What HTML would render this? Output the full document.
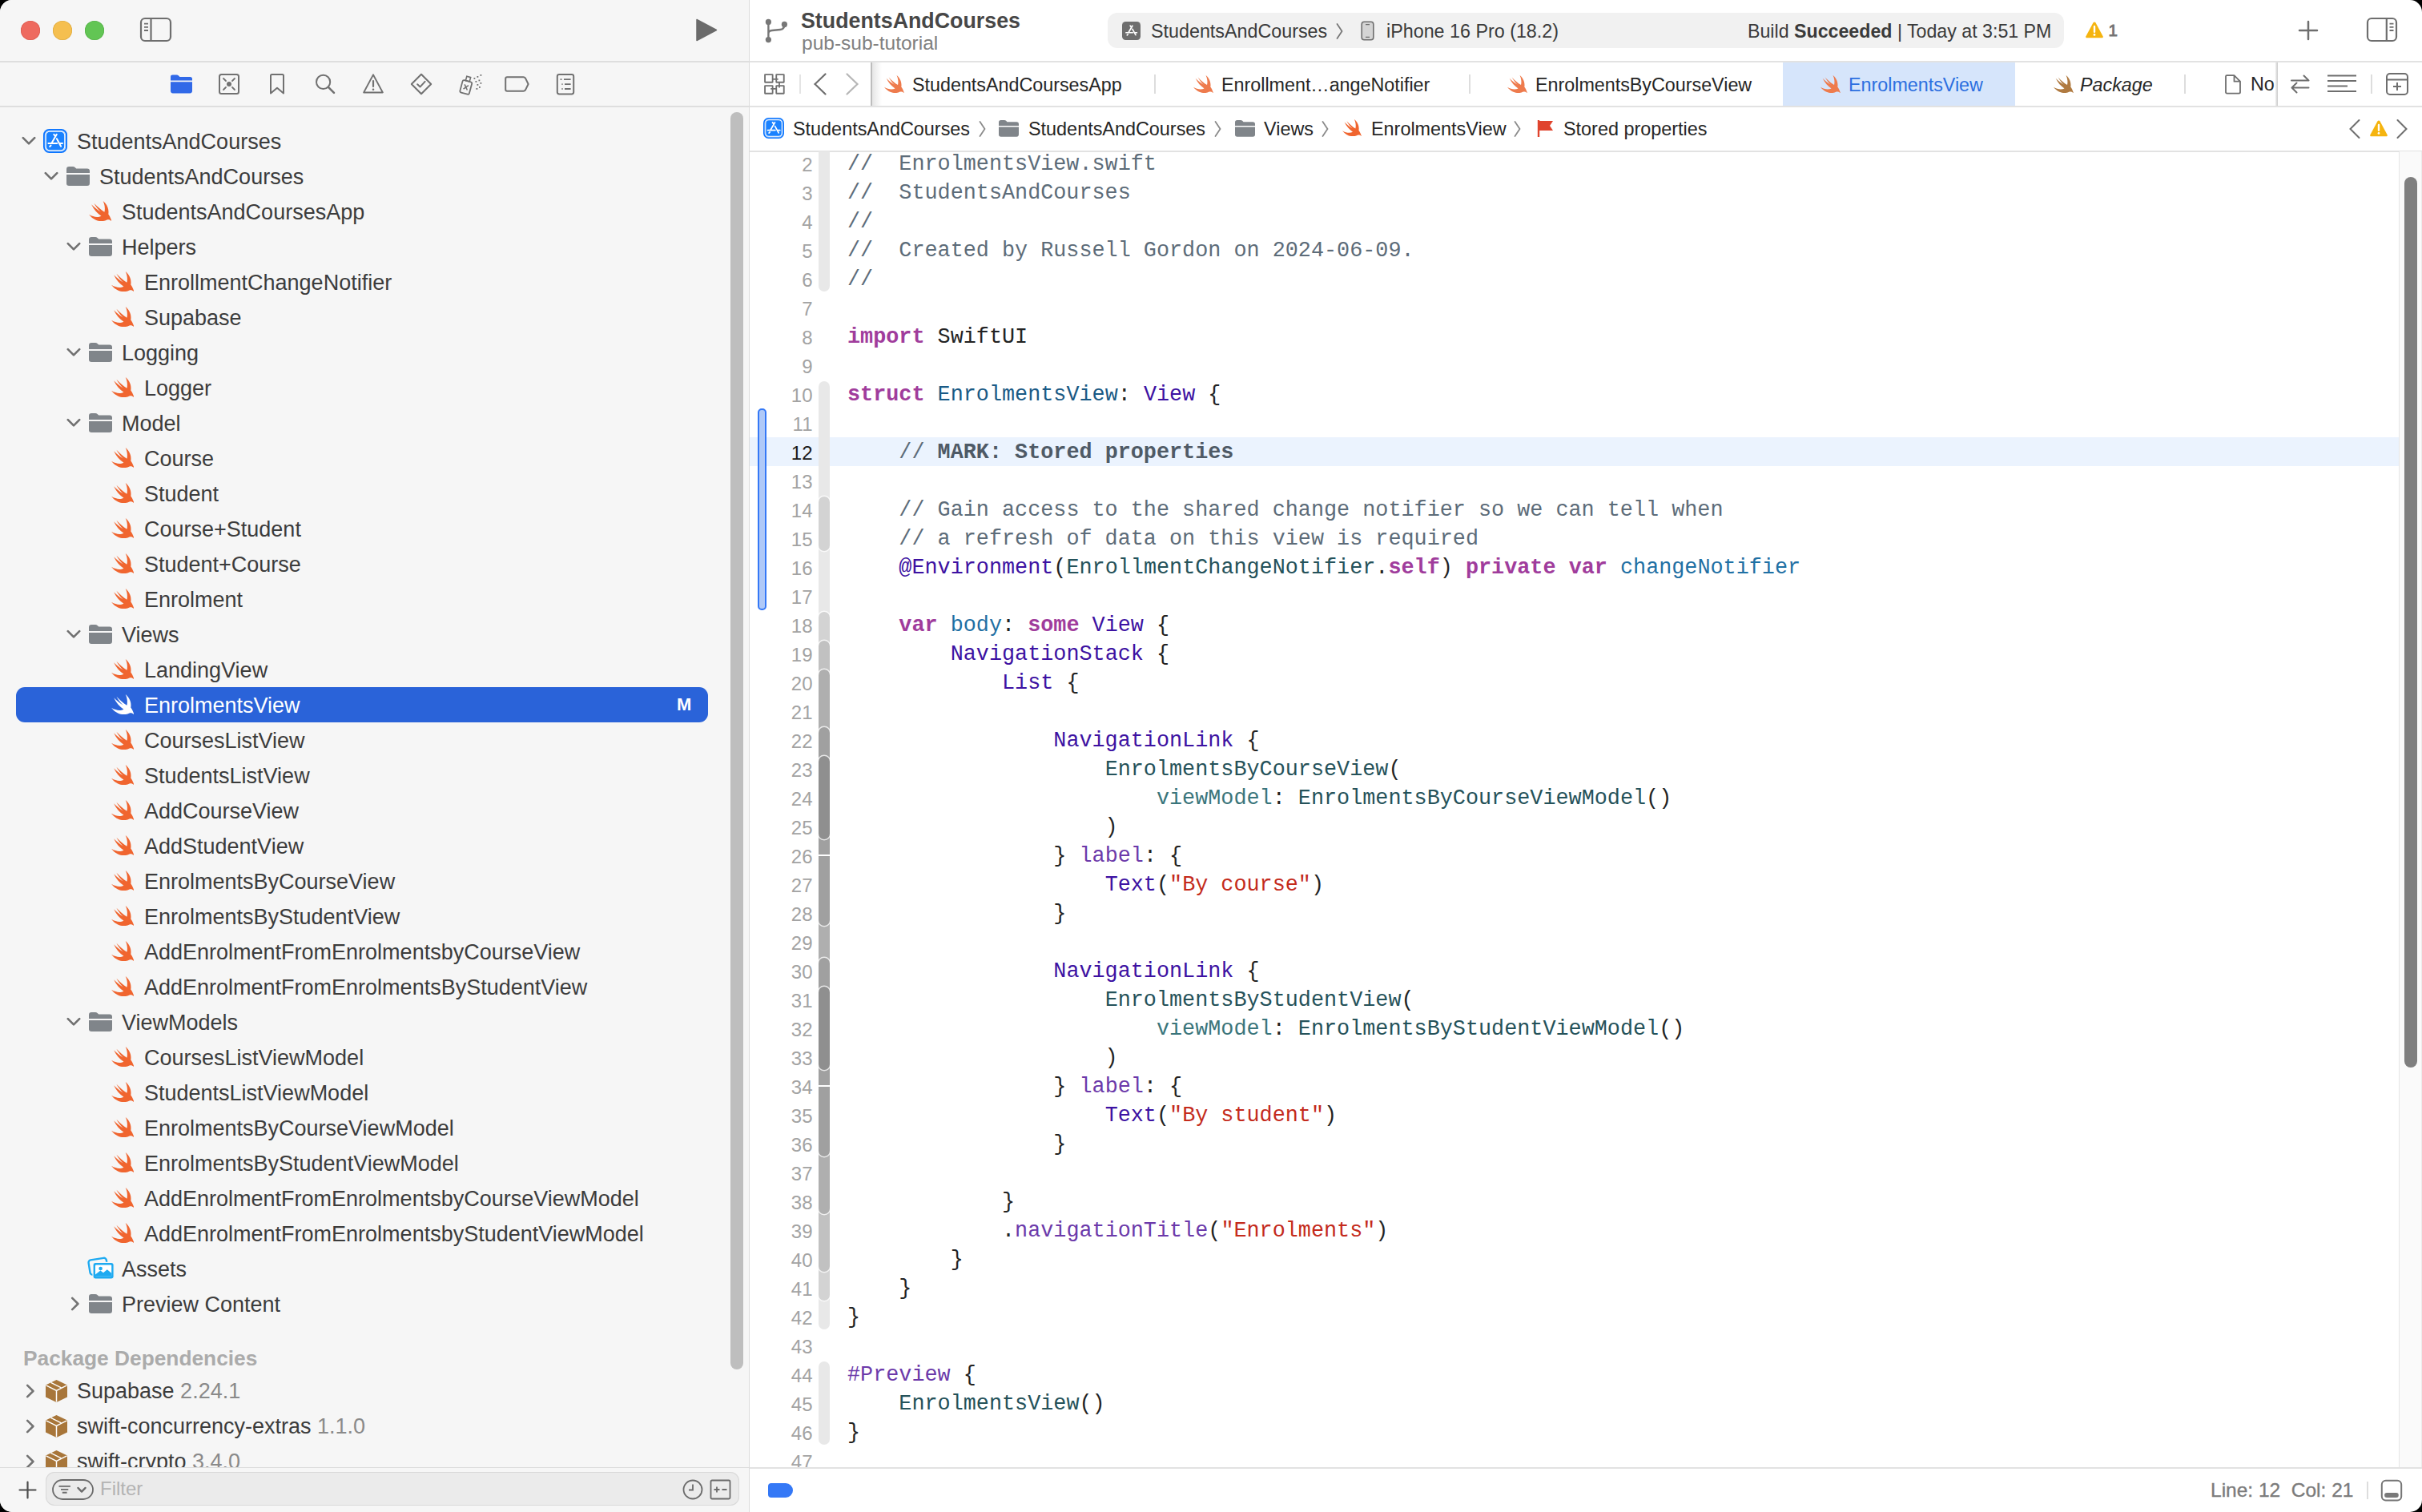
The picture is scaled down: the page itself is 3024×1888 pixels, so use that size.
<!DOCTYPE html><html><head><meta charset="utf-8"><style>
html,body{margin:0;padding:0;width:3024px;height:1888px;overflow:hidden;background:#000;}
#win{position:absolute;left:0;top:0;width:3024px;height:1888px;border-radius:15px;overflow:hidden;background:#fff;}
.abs{position:absolute;}
.code{position:absolute;left:1058px;font-family:"Liberation Mono",monospace;font-size:26.8px;white-space:pre;color:#232323;}
.ln{position:absolute;left:960px;width:59.5px;text-align:right;font-family:"Liberation Sans",sans-serif;font-size:24px;color:#a3a3a3;}
.row{position:absolute;height:44px;line-height:44px;font-family:"Liberation Sans",sans-serif;font-size:27px;color:#3c3c3c;white-space:pre;}
.k{color:#a03c9c;font-weight:bold}.c{color:#5d6c79}.s{color:#c42b1c}.t{color:#1a5a85}.d{color:#1f70a4}.sy{color:#3d12a2}.p{color:#25525a}.pf{color:#3a757b}.sf{color:#6c3aaa}.mk{color:#4f5a66;font-weight:bold}
</style></head><body><div id="win">
<div class="abs" style="left:0;top:0;width:935px;height:1888px;background:#f6f6f6"></div>
<div class="abs" style="left:0;top:76px;width:935px;height:2px;background:#dedede"></div>
<div class="abs" style="left:0;top:132px;width:935px;height:2px;background:#dedede"></div>
<div class="abs" style="left:935px;top:0;width:1px;height:1888px;background:#dcdcdc"></div>
<div class="abs" style="left:26px;top:26px;width:24px;height:24px;border-radius:50%;background:#ee6a5f;box-shadow:inset 0 0 0 0.6px #d8574b"></div>
<div class="abs" style="left:66px;top:26px;width:24px;height:24px;border-radius:50%;background:#f5bf4f;box-shadow:inset 0 0 0 0.6px #dba73c"></div>
<div class="abs" style="left:106px;top:26px;width:24px;height:24px;border-radius:50%;background:#62c554;box-shadow:inset 0 0 0 0.6px #52ad45"></div>
<svg class="abs" style="left:174px;top:21px" width="41" height="32" viewBox="0 0 41 32"><rect x="2" y="2" width="37" height="28" rx="5" fill="none" stroke="#6e6e6e" stroke-width="2.2"/><path d="M14.5,2 V30" stroke="#6e6e6e" stroke-width="2.2"/><path d="M6,8.6 H11 M6,12.8 H11 M6,17 H11" stroke="#6e6e6e" stroke-width="1.8"/></svg>
<svg class="abs" style="left:866px;top:22px" width="32" height="32" viewBox="0 0 32 32"><path d="M4,2.5 L28.5,15.5 L4,28.5 Z" fill="#6b6b6b" stroke="#6b6b6b" stroke-width="1.5" stroke-linejoin="round"/></svg>
<svg class="abs" style="left:213px;top:93px" width="27" height="24" viewBox="0 0 27 24"><path fill="#3169e8" d="M0,3 Q0,0.6 2.6,0.6 H7.6 Q9,0.6 10,1.6 L11.4,3 H24.4 Q27,3 27,5.6 V7.4 H0 Z"/><path fill="#3169e8" d="M0,9.2 H27 V20.6 Q27,23.4 24.2,23.4 H2.8 Q0,23.4 0,20.6 Z"/></svg>
<svg class="abs" style="left:272px;top:91px" width="28" height="28" viewBox="0 0 28 28"><rect x="2" y="2" width="24" height="24" rx="2.5" fill="none" stroke="#717171" stroke-width="2"/><circle cx="14" cy="14" r="3" fill="#717171"/><path d="M7,7 L10,10 M21,7 L18,10 M7,21 L10,18 M21,21 L18,18" stroke="#717171" stroke-width="1.8" stroke-linecap="round"/></svg>
<svg class="abs" style="left:335px;top:91px" width="22" height="28" viewBox="0 0 22 28"><path d="M3,3.5 Q3,2 4.5,2 H17.5 Q19,2 19,3.5 V25.5 L11,18.8 L3,25.5 Z" fill="none" stroke="#717171" stroke-width="2" stroke-linejoin="round"/></svg>
<svg class="abs" style="left:392px;top:91px" width="28" height="28" viewBox="0 0 28 28"><circle cx="11.6" cy="11.4" r="8.6" fill="none" stroke="#717171" stroke-width="2"/><path d="M18,17.8 L25,24.8" stroke="#717171" stroke-width="2.6" stroke-linecap="round"/></svg>
<svg class="abs" style="left:452px;top:91px" width="28" height="28" viewBox="0 0 28 28"><path d="M14,2.4 L25.8,24.4 H2.2 Z" fill="none" stroke="#717171" stroke-width="2" stroke-linejoin="round"/><path d="M14,10 V17" stroke="#717171" stroke-width="2.2" stroke-linecap="round"/><circle cx="14" cy="20.8" r="1.3" fill="#717171"/></svg>
<svg class="abs" style="left:512px;top:91px" width="28" height="28" viewBox="0 0 28 28"><path d="M14,1.8 L26.2,14 L14,26.2 L1.8,14 Z" fill="none" stroke="#717171" stroke-width="2" stroke-linejoin="round"/><path d="M9.2,14.2 L12.6,17.4 L18.6,10.8" fill="none" stroke="#717171" stroke-width="2" stroke-linecap="round" stroke-linejoin="round"/></svg>
<svg class="abs" style="left:572px;top:91px" width="30" height="28" viewBox="0 0 30 28"><g transform="rotate(15 10 17)"><rect x="4" y="10" width="12" height="16" rx="2" fill="none" stroke="#717171" stroke-width="1.8"/><rect x="7.5" y="4.5" width="5" height="5.5" fill="none" stroke="#717171" stroke-width="1.6"/><path d="M7.5,15 L12.5,21 M12.5,15 L7.5,21" stroke="#717171" stroke-width="1.6"/></g><g fill="#717171"><rect x="19.5" y="6" width="1.8" height="1.8"/><rect x="23.5" y="4" width="1.8" height="1.8"/><rect x="27.5" y="2" width="1.8" height="1.8"/><rect x="21.5" y="10" width="1.8" height="1.8"/><rect x="25.5" y="8.5" width="1.8" height="1.8"/><rect x="27.5" y="12" width="1.8" height="1.8"/><rect x="23.5" y="14" width="1.8" height="1.8"/><rect x="26" y="17" width="1.8" height="1.8"/><rect x="22.5" y="19" width="1.8" height="1.8"/></g></svg>
<svg class="abs" style="left:630px;top:94px" width="32" height="22" viewBox="0 0 32 22"><path d="M3.2,2.2 H23.5 Q25,2.2 26,3.6 L29.6,11 L26,18.4 Q25,19.8 23.5,19.8 H3.2 Q1.2,19.8 1.2,17.8 V4.2 Q1.2,2.2 3.2,2.2 Z" fill="none" stroke="#717171" stroke-width="2" stroke-linejoin="round"/></svg>
<svg class="abs" style="left:694px;top:91px" width="24" height="28" viewBox="0 0 24 28"><rect x="1.8" y="2" width="20.4" height="24.4" rx="2.4" fill="none" stroke="#717171" stroke-width="2"/><path d="M5.6,8.2 H7.4 M10,8.2 H18.6 M7.4,14.2 H8.6 M11,14.2 H18.6 M7.4,20 H8.6 M11,20 H18.6" stroke="#717171" stroke-width="1.8"/></svg>
<div class="abs" style="left:0;top:134px;width:935px;height:1698px;overflow:hidden">
<svg style="position:absolute;left:27px;top:35.5px" width="18" height="12" viewBox="0 0 18 12"><path d="M1.8,2.2 L9,9.4 L16.2,2.2" fill="none" stroke="#707070" stroke-width="2.6" stroke-linecap="round" stroke-linejoin="round"/></svg>
<svg style="position:absolute;left:54px;top:27px" width="30" height="30" viewBox="0 0 30 30"><rect x="0" y="0" width="30" height="30" rx="7.5" fill="#0a74ff"/><rect x="2.4" y="2.4" width="25.2" height="25.2" rx="5.4" fill="#ffffff"/><rect x="2.4" y="2.4" width="25.2" height="25.2" rx="5.4" fill="none" stroke="#b9d6fb" stroke-width="1.2"/><rect x="3.8" y="3.8" width="22.4" height="22.4" rx="4.2" fill="#1a82ff"/><g stroke="#fff" stroke-width="2" stroke-linecap="round" fill="none"><path d="M13.3,6.8 L15.1,9.2 M16.8,6.8 L10.3,17.9 M6.4,17.9 H17.2 M20.4,17.9 H24 M16.9,12.2 L22.1,21.8 M9.5,20.6 L8.2,22"/></g></svg>
<div class="row" style="left:96px;top:21px;color:#3c3c3c">StudentsAndCourses</div>
<svg style="position:absolute;left:55px;top:79.5px" width="18" height="12" viewBox="0 0 18 12"><path d="M1.8,2.2 L9,9.4 L16.2,2.2" fill="none" stroke="#707070" stroke-width="2.6" stroke-linecap="round" stroke-linejoin="round"/></svg>
<svg style="position:absolute;left:83.0px;top:74px" width="29" height="24" viewBox="0 0 29 24"><path fill="#80858a" d="M0,3.2 Q0,0 3.2,0 H8 Q9.6,0 10.6,1 L12.2,2.6 H25.8 Q29,2.6 29,5.6 V8 H0 Z"/><path fill="#80858a" d="M0,10 H29 V20.8 Q29,24 25.8,24 H3.2 Q0,24 0,20.8 Z"/></svg>
<div class="row" style="left:124px;top:65px;color:#3c3c3c">StudentsAndCourses</div>
<svg style="position:absolute;left:110.5px;top:116.5px" width="28.5" height="25.4" viewBox="0 0 28.5 25.4"><path fill="#f0652f" d="M17.7,0 C22.2,3.6 25.4,9.6 24.3,16.4 C26,18.6 27.4,21.8 28.5,25.4 C26.9,23.6 24.7,22.9 22.6,23.5 C17.2,26.4 7.4,26.3 0,16.8 C5.8,20.3 11.6,20.7 15.4,18.7 C10.6,15.4 6.1,10.9 3.1,4.3 C6.9,8.1 11.3,11.6 14.6,13.4 C11.6,10.7 8.6,6.7 6.4,2.7 C10.2,6.6 15.1,11.1 19.4,13.8 C20.4,9.6 19.9,4.6 17.7,0 Z"/></svg>
<div class="row" style="left:152px;top:109px;color:#3c3c3c">StudentsAndCoursesApp</div>
<svg style="position:absolute;left:83px;top:167.5px" width="18" height="12" viewBox="0 0 18 12"><path d="M1.8,2.2 L9,9.4 L16.2,2.2" fill="none" stroke="#707070" stroke-width="2.6" stroke-linecap="round" stroke-linejoin="round"/></svg>
<svg style="position:absolute;left:111.0px;top:162px" width="29" height="24" viewBox="0 0 29 24"><path fill="#80858a" d="M0,3.2 Q0,0 3.2,0 H8 Q9.6,0 10.6,1 L12.2,2.6 H25.8 Q29,2.6 29,5.6 V8 H0 Z"/><path fill="#80858a" d="M0,10 H29 V20.8 Q29,24 25.8,24 H3.2 Q0,24 0,20.8 Z"/></svg>
<div class="row" style="left:152px;top:153px;color:#3c3c3c">Helpers</div>
<svg style="position:absolute;left:138.5px;top:204.5px" width="28.5" height="25.4" viewBox="0 0 28.5 25.4"><path fill="#f0652f" d="M17.7,0 C22.2,3.6 25.4,9.6 24.3,16.4 C26,18.6 27.4,21.8 28.5,25.4 C26.9,23.6 24.7,22.9 22.6,23.5 C17.2,26.4 7.4,26.3 0,16.8 C5.8,20.3 11.6,20.7 15.4,18.7 C10.6,15.4 6.1,10.9 3.1,4.3 C6.9,8.1 11.3,11.6 14.6,13.4 C11.6,10.7 8.6,6.7 6.4,2.7 C10.2,6.6 15.1,11.1 19.4,13.8 C20.4,9.6 19.9,4.6 17.7,0 Z"/></svg>
<div class="row" style="left:180px;top:197px;color:#3c3c3c">EnrollmentChangeNotifier</div>
<svg style="position:absolute;left:138.5px;top:248.5px" width="28.5" height="25.4" viewBox="0 0 28.5 25.4"><path fill="#f0652f" d="M17.7,0 C22.2,3.6 25.4,9.6 24.3,16.4 C26,18.6 27.4,21.8 28.5,25.4 C26.9,23.6 24.7,22.9 22.6,23.5 C17.2,26.4 7.4,26.3 0,16.8 C5.8,20.3 11.6,20.7 15.4,18.7 C10.6,15.4 6.1,10.9 3.1,4.3 C6.9,8.1 11.3,11.6 14.6,13.4 C11.6,10.7 8.6,6.7 6.4,2.7 C10.2,6.6 15.1,11.1 19.4,13.8 C20.4,9.6 19.9,4.6 17.7,0 Z"/></svg>
<div class="row" style="left:180px;top:241px;color:#3c3c3c">Supabase</div>
<svg style="position:absolute;left:83px;top:299.5px" width="18" height="12" viewBox="0 0 18 12"><path d="M1.8,2.2 L9,9.4 L16.2,2.2" fill="none" stroke="#707070" stroke-width="2.6" stroke-linecap="round" stroke-linejoin="round"/></svg>
<svg style="position:absolute;left:111.0px;top:294px" width="29" height="24" viewBox="0 0 29 24"><path fill="#80858a" d="M0,3.2 Q0,0 3.2,0 H8 Q9.6,0 10.6,1 L12.2,2.6 H25.8 Q29,2.6 29,5.6 V8 H0 Z"/><path fill="#80858a" d="M0,10 H29 V20.8 Q29,24 25.8,24 H3.2 Q0,24 0,20.8 Z"/></svg>
<div class="row" style="left:152px;top:285px;color:#3c3c3c">Logging</div>
<svg style="position:absolute;left:138.5px;top:336.5px" width="28.5" height="25.4" viewBox="0 0 28.5 25.4"><path fill="#f0652f" d="M17.7,0 C22.2,3.6 25.4,9.6 24.3,16.4 C26,18.6 27.4,21.8 28.5,25.4 C26.9,23.6 24.7,22.9 22.6,23.5 C17.2,26.4 7.4,26.3 0,16.8 C5.8,20.3 11.6,20.7 15.4,18.7 C10.6,15.4 6.1,10.9 3.1,4.3 C6.9,8.1 11.3,11.6 14.6,13.4 C11.6,10.7 8.6,6.7 6.4,2.7 C10.2,6.6 15.1,11.1 19.4,13.8 C20.4,9.6 19.9,4.6 17.7,0 Z"/></svg>
<div class="row" style="left:180px;top:329px;color:#3c3c3c">Logger</div>
<svg style="position:absolute;left:83px;top:387.5px" width="18" height="12" viewBox="0 0 18 12"><path d="M1.8,2.2 L9,9.4 L16.2,2.2" fill="none" stroke="#707070" stroke-width="2.6" stroke-linecap="round" stroke-linejoin="round"/></svg>
<svg style="position:absolute;left:111.0px;top:382px" width="29" height="24" viewBox="0 0 29 24"><path fill="#80858a" d="M0,3.2 Q0,0 3.2,0 H8 Q9.6,0 10.6,1 L12.2,2.6 H25.8 Q29,2.6 29,5.6 V8 H0 Z"/><path fill="#80858a" d="M0,10 H29 V20.8 Q29,24 25.8,24 H3.2 Q0,24 0,20.8 Z"/></svg>
<div class="row" style="left:152px;top:373px;color:#3c3c3c">Model</div>
<svg style="position:absolute;left:138.5px;top:424.5px" width="28.5" height="25.4" viewBox="0 0 28.5 25.4"><path fill="#f0652f" d="M17.7,0 C22.2,3.6 25.4,9.6 24.3,16.4 C26,18.6 27.4,21.8 28.5,25.4 C26.9,23.6 24.7,22.9 22.6,23.5 C17.2,26.4 7.4,26.3 0,16.8 C5.8,20.3 11.6,20.7 15.4,18.7 C10.6,15.4 6.1,10.9 3.1,4.3 C6.9,8.1 11.3,11.6 14.6,13.4 C11.6,10.7 8.6,6.7 6.4,2.7 C10.2,6.6 15.1,11.1 19.4,13.8 C20.4,9.6 19.9,4.6 17.7,0 Z"/></svg>
<div class="row" style="left:180px;top:417px;color:#3c3c3c">Course</div>
<svg style="position:absolute;left:138.5px;top:468.5px" width="28.5" height="25.4" viewBox="0 0 28.5 25.4"><path fill="#f0652f" d="M17.7,0 C22.2,3.6 25.4,9.6 24.3,16.4 C26,18.6 27.4,21.8 28.5,25.4 C26.9,23.6 24.7,22.9 22.6,23.5 C17.2,26.4 7.4,26.3 0,16.8 C5.8,20.3 11.6,20.7 15.4,18.7 C10.6,15.4 6.1,10.9 3.1,4.3 C6.9,8.1 11.3,11.6 14.6,13.4 C11.6,10.7 8.6,6.7 6.4,2.7 C10.2,6.6 15.1,11.1 19.4,13.8 C20.4,9.6 19.9,4.6 17.7,0 Z"/></svg>
<div class="row" style="left:180px;top:461px;color:#3c3c3c">Student</div>
<svg style="position:absolute;left:138.5px;top:512.5px" width="28.5" height="25.4" viewBox="0 0 28.5 25.4"><path fill="#f0652f" d="M17.7,0 C22.2,3.6 25.4,9.6 24.3,16.4 C26,18.6 27.4,21.8 28.5,25.4 C26.9,23.6 24.7,22.9 22.6,23.5 C17.2,26.4 7.4,26.3 0,16.8 C5.8,20.3 11.6,20.7 15.4,18.7 C10.6,15.4 6.1,10.9 3.1,4.3 C6.9,8.1 11.3,11.6 14.6,13.4 C11.6,10.7 8.6,6.7 6.4,2.7 C10.2,6.6 15.1,11.1 19.4,13.8 C20.4,9.6 19.9,4.6 17.7,0 Z"/></svg>
<div class="row" style="left:180px;top:505px;color:#3c3c3c">Course+Student</div>
<svg style="position:absolute;left:138.5px;top:556.5px" width="28.5" height="25.4" viewBox="0 0 28.5 25.4"><path fill="#f0652f" d="M17.7,0 C22.2,3.6 25.4,9.6 24.3,16.4 C26,18.6 27.4,21.8 28.5,25.4 C26.9,23.6 24.7,22.9 22.6,23.5 C17.2,26.4 7.4,26.3 0,16.8 C5.8,20.3 11.6,20.7 15.4,18.7 C10.6,15.4 6.1,10.9 3.1,4.3 C6.9,8.1 11.3,11.6 14.6,13.4 C11.6,10.7 8.6,6.7 6.4,2.7 C10.2,6.6 15.1,11.1 19.4,13.8 C20.4,9.6 19.9,4.6 17.7,0 Z"/></svg>
<div class="row" style="left:180px;top:549px;color:#3c3c3c">Student+Course</div>
<svg style="position:absolute;left:138.5px;top:600.5px" width="28.5" height="25.4" viewBox="0 0 28.5 25.4"><path fill="#f0652f" d="M17.7,0 C22.2,3.6 25.4,9.6 24.3,16.4 C26,18.6 27.4,21.8 28.5,25.4 C26.9,23.6 24.7,22.9 22.6,23.5 C17.2,26.4 7.4,26.3 0,16.8 C5.8,20.3 11.6,20.7 15.4,18.7 C10.6,15.4 6.1,10.9 3.1,4.3 C6.9,8.1 11.3,11.6 14.6,13.4 C11.6,10.7 8.6,6.7 6.4,2.7 C10.2,6.6 15.1,11.1 19.4,13.8 C20.4,9.6 19.9,4.6 17.7,0 Z"/></svg>
<div class="row" style="left:180px;top:593px;color:#3c3c3c">Enrolment</div>
<svg style="position:absolute;left:83px;top:651.5px" width="18" height="12" viewBox="0 0 18 12"><path d="M1.8,2.2 L9,9.4 L16.2,2.2" fill="none" stroke="#707070" stroke-width="2.6" stroke-linecap="round" stroke-linejoin="round"/></svg>
<svg style="position:absolute;left:111.0px;top:646px" width="29" height="24" viewBox="0 0 29 24"><path fill="#80858a" d="M0,3.2 Q0,0 3.2,0 H8 Q9.6,0 10.6,1 L12.2,2.6 H25.8 Q29,2.6 29,5.6 V8 H0 Z"/><path fill="#80858a" d="M0,10 H29 V20.8 Q29,24 25.8,24 H3.2 Q0,24 0,20.8 Z"/></svg>
<div class="row" style="left:152px;top:637px;color:#3c3c3c">Views</div>
<svg style="position:absolute;left:138.5px;top:688.5px" width="28.5" height="25.4" viewBox="0 0 28.5 25.4"><path fill="#f0652f" d="M17.7,0 C22.2,3.6 25.4,9.6 24.3,16.4 C26,18.6 27.4,21.8 28.5,25.4 C26.9,23.6 24.7,22.9 22.6,23.5 C17.2,26.4 7.4,26.3 0,16.8 C5.8,20.3 11.6,20.7 15.4,18.7 C10.6,15.4 6.1,10.9 3.1,4.3 C6.9,8.1 11.3,11.6 14.6,13.4 C11.6,10.7 8.6,6.7 6.4,2.7 C10.2,6.6 15.1,11.1 19.4,13.8 C20.4,9.6 19.9,4.6 17.7,0 Z"/></svg>
<div class="row" style="left:180px;top:681px;color:#3c3c3c">LandingView</div>
<div class="abs" style="left:20px;top:724px;width:864px;height:44px;border-radius:11px;background:#2a63d9"></div>
<svg style="position:absolute;left:138.5px;top:732.5px" width="28.5" height="25.4" viewBox="0 0 28.5 25.4"><path fill="#ffffff" d="M17.7,0 C22.2,3.6 25.4,9.6 24.3,16.4 C26,18.6 27.4,21.8 28.5,25.4 C26.9,23.6 24.7,22.9 22.6,23.5 C17.2,26.4 7.4,26.3 0,16.8 C5.8,20.3 11.6,20.7 15.4,18.7 C10.6,15.4 6.1,10.9 3.1,4.3 C6.9,8.1 11.3,11.6 14.6,13.4 C11.6,10.7 8.6,6.7 6.4,2.7 C10.2,6.6 15.1,11.1 19.4,13.8 C20.4,9.6 19.9,4.6 17.7,0 Z"/></svg>
<div class="row" style="left:180px;top:725px;color:#ffffff">EnrolmentsView</div>
<div class="abs" style="left:845px;top:724px;height:44px;line-height:44px;font-family:'Liberation Sans', sans-serif;font-weight:bold;font-size:22px;color:#fff">M</div>
<svg style="position:absolute;left:138.5px;top:776.5px" width="28.5" height="25.4" viewBox="0 0 28.5 25.4"><path fill="#f0652f" d="M17.7,0 C22.2,3.6 25.4,9.6 24.3,16.4 C26,18.6 27.4,21.8 28.5,25.4 C26.9,23.6 24.7,22.9 22.6,23.5 C17.2,26.4 7.4,26.3 0,16.8 C5.8,20.3 11.6,20.7 15.4,18.7 C10.6,15.4 6.1,10.9 3.1,4.3 C6.9,8.1 11.3,11.6 14.6,13.4 C11.6,10.7 8.6,6.7 6.4,2.7 C10.2,6.6 15.1,11.1 19.4,13.8 C20.4,9.6 19.9,4.6 17.7,0 Z"/></svg>
<div class="row" style="left:180px;top:769px;color:#3c3c3c">CoursesListView</div>
<svg style="position:absolute;left:138.5px;top:820.5px" width="28.5" height="25.4" viewBox="0 0 28.5 25.4"><path fill="#f0652f" d="M17.7,0 C22.2,3.6 25.4,9.6 24.3,16.4 C26,18.6 27.4,21.8 28.5,25.4 C26.9,23.6 24.7,22.9 22.6,23.5 C17.2,26.4 7.4,26.3 0,16.8 C5.8,20.3 11.6,20.7 15.4,18.7 C10.6,15.4 6.1,10.9 3.1,4.3 C6.9,8.1 11.3,11.6 14.6,13.4 C11.6,10.7 8.6,6.7 6.4,2.7 C10.2,6.6 15.1,11.1 19.4,13.8 C20.4,9.6 19.9,4.6 17.7,0 Z"/></svg>
<div class="row" style="left:180px;top:813px;color:#3c3c3c">StudentsListView</div>
<svg style="position:absolute;left:138.5px;top:864.5px" width="28.5" height="25.4" viewBox="0 0 28.5 25.4"><path fill="#f0652f" d="M17.7,0 C22.2,3.6 25.4,9.6 24.3,16.4 C26,18.6 27.4,21.8 28.5,25.4 C26.9,23.6 24.7,22.9 22.6,23.5 C17.2,26.4 7.4,26.3 0,16.8 C5.8,20.3 11.6,20.7 15.4,18.7 C10.6,15.4 6.1,10.9 3.1,4.3 C6.9,8.1 11.3,11.6 14.6,13.4 C11.6,10.7 8.6,6.7 6.4,2.7 C10.2,6.6 15.1,11.1 19.4,13.8 C20.4,9.6 19.9,4.6 17.7,0 Z"/></svg>
<div class="row" style="left:180px;top:857px;color:#3c3c3c">AddCourseView</div>
<svg style="position:absolute;left:138.5px;top:908.5px" width="28.5" height="25.4" viewBox="0 0 28.5 25.4"><path fill="#f0652f" d="M17.7,0 C22.2,3.6 25.4,9.6 24.3,16.4 C26,18.6 27.4,21.8 28.5,25.4 C26.9,23.6 24.7,22.9 22.6,23.5 C17.2,26.4 7.4,26.3 0,16.8 C5.8,20.3 11.6,20.7 15.4,18.7 C10.6,15.4 6.1,10.9 3.1,4.3 C6.9,8.1 11.3,11.6 14.6,13.4 C11.6,10.7 8.6,6.7 6.4,2.7 C10.2,6.6 15.1,11.1 19.4,13.8 C20.4,9.6 19.9,4.6 17.7,0 Z"/></svg>
<div class="row" style="left:180px;top:901px;color:#3c3c3c">AddStudentView</div>
<svg style="position:absolute;left:138.5px;top:952.5px" width="28.5" height="25.4" viewBox="0 0 28.5 25.4"><path fill="#f0652f" d="M17.7,0 C22.2,3.6 25.4,9.6 24.3,16.4 C26,18.6 27.4,21.8 28.5,25.4 C26.9,23.6 24.7,22.9 22.6,23.5 C17.2,26.4 7.4,26.3 0,16.8 C5.8,20.3 11.6,20.7 15.4,18.7 C10.6,15.4 6.1,10.9 3.1,4.3 C6.9,8.1 11.3,11.6 14.6,13.4 C11.6,10.7 8.6,6.7 6.4,2.7 C10.2,6.6 15.1,11.1 19.4,13.8 C20.4,9.6 19.9,4.6 17.7,0 Z"/></svg>
<div class="row" style="left:180px;top:945px;color:#3c3c3c">EnrolmentsByCourseView</div>
<svg style="position:absolute;left:138.5px;top:996.5px" width="28.5" height="25.4" viewBox="0 0 28.5 25.4"><path fill="#f0652f" d="M17.7,0 C22.2,3.6 25.4,9.6 24.3,16.4 C26,18.6 27.4,21.8 28.5,25.4 C26.9,23.6 24.7,22.9 22.6,23.5 C17.2,26.4 7.4,26.3 0,16.8 C5.8,20.3 11.6,20.7 15.4,18.7 C10.6,15.4 6.1,10.9 3.1,4.3 C6.9,8.1 11.3,11.6 14.6,13.4 C11.6,10.7 8.6,6.7 6.4,2.7 C10.2,6.6 15.1,11.1 19.4,13.8 C20.4,9.6 19.9,4.6 17.7,0 Z"/></svg>
<div class="row" style="left:180px;top:989px;color:#3c3c3c">EnrolmentsByStudentView</div>
<svg style="position:absolute;left:138.5px;top:1040.5px" width="28.5" height="25.4" viewBox="0 0 28.5 25.4"><path fill="#f0652f" d="M17.7,0 C22.2,3.6 25.4,9.6 24.3,16.4 C26,18.6 27.4,21.8 28.5,25.4 C26.9,23.6 24.7,22.9 22.6,23.5 C17.2,26.4 7.4,26.3 0,16.8 C5.8,20.3 11.6,20.7 15.4,18.7 C10.6,15.4 6.1,10.9 3.1,4.3 C6.9,8.1 11.3,11.6 14.6,13.4 C11.6,10.7 8.6,6.7 6.4,2.7 C10.2,6.6 15.1,11.1 19.4,13.8 C20.4,9.6 19.9,4.6 17.7,0 Z"/></svg>
<div class="row" style="left:180px;top:1033px;color:#3c3c3c">AddEnrolmentFromEnrolmentsbyCourseView</div>
<svg style="position:absolute;left:138.5px;top:1084.5px" width="28.5" height="25.4" viewBox="0 0 28.5 25.4"><path fill="#f0652f" d="M17.7,0 C22.2,3.6 25.4,9.6 24.3,16.4 C26,18.6 27.4,21.8 28.5,25.4 C26.9,23.6 24.7,22.9 22.6,23.5 C17.2,26.4 7.4,26.3 0,16.8 C5.8,20.3 11.6,20.7 15.4,18.7 C10.6,15.4 6.1,10.9 3.1,4.3 C6.9,8.1 11.3,11.6 14.6,13.4 C11.6,10.7 8.6,6.7 6.4,2.7 C10.2,6.6 15.1,11.1 19.4,13.8 C20.4,9.6 19.9,4.6 17.7,0 Z"/></svg>
<div class="row" style="left:180px;top:1077px;color:#3c3c3c">AddEnrolmentFromEnrolmentsByStudentView</div>
<svg style="position:absolute;left:83px;top:1135.5px" width="18" height="12" viewBox="0 0 18 12"><path d="M1.8,2.2 L9,9.4 L16.2,2.2" fill="none" stroke="#707070" stroke-width="2.6" stroke-linecap="round" stroke-linejoin="round"/></svg>
<svg style="position:absolute;left:111.0px;top:1130px" width="29" height="24" viewBox="0 0 29 24"><path fill="#80858a" d="M0,3.2 Q0,0 3.2,0 H8 Q9.6,0 10.6,1 L12.2,2.6 H25.8 Q29,2.6 29,5.6 V8 H0 Z"/><path fill="#80858a" d="M0,10 H29 V20.8 Q29,24 25.8,24 H3.2 Q0,24 0,20.8 Z"/></svg>
<div class="row" style="left:152px;top:1121px;color:#3c3c3c">ViewModels</div>
<svg style="position:absolute;left:138.5px;top:1172.5px" width="28.5" height="25.4" viewBox="0 0 28.5 25.4"><path fill="#f0652f" d="M17.7,0 C22.2,3.6 25.4,9.6 24.3,16.4 C26,18.6 27.4,21.8 28.5,25.4 C26.9,23.6 24.7,22.9 22.6,23.5 C17.2,26.4 7.4,26.3 0,16.8 C5.8,20.3 11.6,20.7 15.4,18.7 C10.6,15.4 6.1,10.9 3.1,4.3 C6.9,8.1 11.3,11.6 14.6,13.4 C11.6,10.7 8.6,6.7 6.4,2.7 C10.2,6.6 15.1,11.1 19.4,13.8 C20.4,9.6 19.9,4.6 17.7,0 Z"/></svg>
<div class="row" style="left:180px;top:1165px;color:#3c3c3c">CoursesListViewModel</div>
<svg style="position:absolute;left:138.5px;top:1216.5px" width="28.5" height="25.4" viewBox="0 0 28.5 25.4"><path fill="#f0652f" d="M17.7,0 C22.2,3.6 25.4,9.6 24.3,16.4 C26,18.6 27.4,21.8 28.5,25.4 C26.9,23.6 24.7,22.9 22.6,23.5 C17.2,26.4 7.4,26.3 0,16.8 C5.8,20.3 11.6,20.7 15.4,18.7 C10.6,15.4 6.1,10.9 3.1,4.3 C6.9,8.1 11.3,11.6 14.6,13.4 C11.6,10.7 8.6,6.7 6.4,2.7 C10.2,6.6 15.1,11.1 19.4,13.8 C20.4,9.6 19.9,4.6 17.7,0 Z"/></svg>
<div class="row" style="left:180px;top:1209px;color:#3c3c3c">StudentsListViewModel</div>
<svg style="position:absolute;left:138.5px;top:1260.5px" width="28.5" height="25.4" viewBox="0 0 28.5 25.4"><path fill="#f0652f" d="M17.7,0 C22.2,3.6 25.4,9.6 24.3,16.4 C26,18.6 27.4,21.8 28.5,25.4 C26.9,23.6 24.7,22.9 22.6,23.5 C17.2,26.4 7.4,26.3 0,16.8 C5.8,20.3 11.6,20.7 15.4,18.7 C10.6,15.4 6.1,10.9 3.1,4.3 C6.9,8.1 11.3,11.6 14.6,13.4 C11.6,10.7 8.6,6.7 6.4,2.7 C10.2,6.6 15.1,11.1 19.4,13.8 C20.4,9.6 19.9,4.6 17.7,0 Z"/></svg>
<div class="row" style="left:180px;top:1253px;color:#3c3c3c">EnrolmentsByCourseViewModel</div>
<svg style="position:absolute;left:138.5px;top:1304.5px" width="28.5" height="25.4" viewBox="0 0 28.5 25.4"><path fill="#f0652f" d="M17.7,0 C22.2,3.6 25.4,9.6 24.3,16.4 C26,18.6 27.4,21.8 28.5,25.4 C26.9,23.6 24.7,22.9 22.6,23.5 C17.2,26.4 7.4,26.3 0,16.8 C5.8,20.3 11.6,20.7 15.4,18.7 C10.6,15.4 6.1,10.9 3.1,4.3 C6.9,8.1 11.3,11.6 14.6,13.4 C11.6,10.7 8.6,6.7 6.4,2.7 C10.2,6.6 15.1,11.1 19.4,13.8 C20.4,9.6 19.9,4.6 17.7,0 Z"/></svg>
<div class="row" style="left:180px;top:1297px;color:#3c3c3c">EnrolmentsByStudentViewModel</div>
<svg style="position:absolute;left:138.5px;top:1348.5px" width="28.5" height="25.4" viewBox="0 0 28.5 25.4"><path fill="#f0652f" d="M17.7,0 C22.2,3.6 25.4,9.6 24.3,16.4 C26,18.6 27.4,21.8 28.5,25.4 C26.9,23.6 24.7,22.9 22.6,23.5 C17.2,26.4 7.4,26.3 0,16.8 C5.8,20.3 11.6,20.7 15.4,18.7 C10.6,15.4 6.1,10.9 3.1,4.3 C6.9,8.1 11.3,11.6 14.6,13.4 C11.6,10.7 8.6,6.7 6.4,2.7 C10.2,6.6 15.1,11.1 19.4,13.8 C20.4,9.6 19.9,4.6 17.7,0 Z"/></svg>
<div class="row" style="left:180px;top:1341px;color:#3c3c3c">AddEnrolmentFromEnrolmentsbyCourseViewModel</div>
<svg style="position:absolute;left:138.5px;top:1392.5px" width="28.5" height="25.4" viewBox="0 0 28.5 25.4"><path fill="#f0652f" d="M17.7,0 C22.2,3.6 25.4,9.6 24.3,16.4 C26,18.6 27.4,21.8 28.5,25.4 C26.9,23.6 24.7,22.9 22.6,23.5 C17.2,26.4 7.4,26.3 0,16.8 C5.8,20.3 11.6,20.7 15.4,18.7 C10.6,15.4 6.1,10.9 3.1,4.3 C6.9,8.1 11.3,11.6 14.6,13.4 C11.6,10.7 8.6,6.7 6.4,2.7 C10.2,6.6 15.1,11.1 19.4,13.8 C20.4,9.6 19.9,4.6 17.7,0 Z"/></svg>
<div class="row" style="left:180px;top:1385px;color:#3c3c3c">AddEnrolmentFromEnrolmentsbyStudentViewModel</div>
<svg style="position:absolute;left:108px;top:1434px" width="36" height="31" viewBox="0 0 36 31"><rect x="3.4" y="4" width="22.5" height="18.5" rx="3" transform="rotate(-9 14.6 13.2)" fill="none" stroke="#1eaaf1" stroke-width="2.4"/><rect x="8" y="8.4" width="26.2" height="20.6" rx="3.2" fill="#1eaaf1" stroke="#f6f6f6" stroke-width="1.2"/><rect x="11" y="11.4" width="20.2" height="14.4" rx="1" fill="#fff"/><path d="M11,23.6 L17.4,18.6 L21,21.2 L25.8,17.2 L31.2,21.8 V25.8 H11 Z" fill="#1eaaf1"/><circle cx="17.6" cy="16" r="2.3" fill="#1eaaf1"/></svg>
<div class="row" style="left:152px;top:1429px;color:#3c3c3c">Assets</div>
<svg style="position:absolute;left:88px;top:1485px" width="12" height="18" viewBox="0 0 12 18"><path d="M2.2,1.8 L9.4,9 L2.2,16.2" fill="none" stroke="#737373" stroke-width="2.6" stroke-linecap="round" stroke-linejoin="round"/></svg>
<svg style="position:absolute;left:111.0px;top:1482px" width="29" height="24" viewBox="0 0 29 24"><path fill="#80858a" d="M0,3.2 Q0,0 3.2,0 H8 Q9.6,0 10.6,1 L12.2,2.6 H25.8 Q29,2.6 29,5.6 V8 H0 Z"/><path fill="#80858a" d="M0,10 H29 V20.8 Q29,24 25.8,24 H3.2 Q0,24 0,20.8 Z"/></svg>
<div class="row" style="left:152px;top:1473px;color:#3c3c3c">Preview Content</div>
<div class="row" style="left:29px;top:1540px;font-weight:bold;font-size:26.3px;color:#ababab">Package Dependencies</div>
<svg style="position:absolute;left:32px;top:1594px" width="12" height="18" viewBox="0 0 12 18"><path d="M2.2,1.8 L9.4,9 L2.2,16.2" fill="none" stroke="#737373" stroke-width="2.6" stroke-linecap="round" stroke-linejoin="round"/></svg>
<svg style="position:absolute;left:57px;top:1589px" width="27" height="28" viewBox="0 0 27 28"><path fill="#a8763a" d="M13.5,0 L27,6.6 V21.4 L13.5,28 L0,21.4 V6.6 Z"/><g stroke="#fff" stroke-width="1.5" fill="none"><path d="M0.5,6.9 L13.5,13.3 L26.5,6.9"/><path d="M13.5,13.3 V27.6"/><path d="M6.5,3.3 L19.5,9.8"/></g></svg>
<div class="row" style="left:96px;top:1581px">Supabase <span style="color:#8a8a8a">2.24.1</span></div>
<svg style="position:absolute;left:32px;top:1638px" width="12" height="18" viewBox="0 0 12 18"><path d="M2.2,1.8 L9.4,9 L2.2,16.2" fill="none" stroke="#737373" stroke-width="2.6" stroke-linecap="round" stroke-linejoin="round"/></svg>
<svg style="position:absolute;left:57px;top:1633px" width="27" height="28" viewBox="0 0 27 28"><path fill="#a8763a" d="M13.5,0 L27,6.6 V21.4 L13.5,28 L0,21.4 V6.6 Z"/><g stroke="#fff" stroke-width="1.5" fill="none"><path d="M0.5,6.9 L13.5,13.3 L26.5,6.9"/><path d="M13.5,13.3 V27.6"/><path d="M6.5,3.3 L19.5,9.8"/></g></svg>
<div class="row" style="left:96px;top:1625px">swift-concurrency-extras <span style="color:#8a8a8a">1.1.0</span></div>
<svg style="position:absolute;left:32px;top:1682px" width="12" height="18" viewBox="0 0 12 18"><path d="M2.2,1.8 L9.4,9 L2.2,16.2" fill="none" stroke="#737373" stroke-width="2.6" stroke-linecap="round" stroke-linejoin="round"/></svg>
<svg style="position:absolute;left:57px;top:1677px" width="27" height="28" viewBox="0 0 27 28"><path fill="#a8763a" d="M13.5,0 L27,6.6 V21.4 L13.5,28 L0,21.4 V6.6 Z"/><g stroke="#fff" stroke-width="1.5" fill="none"><path d="M0.5,6.9 L13.5,13.3 L26.5,6.9"/><path d="M13.5,13.3 V27.6"/><path d="M6.5,3.3 L19.5,9.8"/></g></svg>
<div class="row" style="left:96px;top:1669px">swift-crypto <span style="color:#8a8a8a">3.4.0</span></div>
<div class="abs" style="left:912px;top:6px;width:16px;height:1570px;border-radius:8px;background:#bebebe"></div>
</div>
<div class="abs" style="left:0;top:1832px;width:935px;height:1px;background:#dcdcdc"></div>
<svg class="abs" style="left:23px;top:1849px" width="23" height="23" viewBox="0 0 23 23"><path d="M11.5,1.5 V21.5 M1.5,11.5 H21.5" stroke="#4d4d4d" stroke-width="2.2" stroke-linecap="round"/></svg>
<div class="abs" style="left:57px;top:1838px;width:866px;height:42px;border-radius:11px;background:#ebebeb;box-shadow:inset 0 0 0 1px #d9d9d9"></div>
<svg class="abs" style="left:64px;top:1846px" width="54" height="28" viewBox="0 0 54 28"><rect x="2" y="2" width="50" height="24" rx="12" fill="none" stroke="#6b6b6b" stroke-width="1.8"/><path d="M9.5,9.9 H23.9 M12,13.9 H21.3 M13.8,17.8 H19.6" stroke="#6b6b6b" stroke-width="1.9"/><path d="M33.4,11.9 L38,16.6 L42.6,11.9" fill="none" stroke="#6b6b6b" stroke-width="2.3" stroke-linecap="round" stroke-linejoin="round"/></svg>
<div class="abs" style="left:125px;top:1838px;height:42px;line-height:42px;font-family:'Liberation Sans', sans-serif;font-size:24px;color:#b3b3b3">Filter</div>
<svg class="abs" style="left:851px;top:1846px" width="28" height="28" viewBox="0 0 28 28"><circle cx="14" cy="14" r="11.5" fill="none" stroke="#6b6b6b" stroke-width="1.8"/><path d="M14,7.5 V14.5 H9" fill="none" stroke="#6b6b6b" stroke-width="1.8"/></svg>
<svg class="abs" style="left:886px;top:1847px" width="27" height="26" viewBox="0 0 27 26"><rect x="1.5" y="1.5" width="24" height="23" rx="1.5" fill="none" stroke="#6b6b6b" stroke-width="1.8"/><path d="M5.5,13 H12.5 M9,9.5 V16.5 M15.5,13 H21.5" stroke="#6b6b6b" stroke-width="1.8"/></svg>
<svg class="abs" style="left:954px;top:22px" width="32" height="34" viewBox="0 0 32 34"><circle cx="5.4" cy="5.4" r="3.6" fill="#777"/><circle cx="25.4" cy="8.4" r="3.6" fill="#777"/><circle cx="5.4" cy="27.6" r="3.6" fill="#777"/><path d="M5.4,5.4 V27.6 M5.4,20 Q5.4,16.4 10,16 L20,15 Q25.4,14.4 25.4,8.4" fill="none" stroke="#777" stroke-width="2.4"/></svg>
<div style="position:absolute;left:1000px;top:12.5px;font-family:'Liberation Sans', sans-serif;font-size:26.8px;color:#474747;font-weight:bold;white-space:pre;line-height:1;">StudentsAndCourses</div>
<div style="position:absolute;left:1001px;top:42px;font-family:'Liberation Sans', sans-serif;font-size:24.5px;color:#808080;font-weight:normal;white-space:pre;line-height:1;">pub-sub-tutorial</div>
<div class="abs" style="left:1383px;top:16px;width:1194px;height:44px;border-radius:12px;background:#f1f1f1"></div>
<svg class="abs" style="left:1401px;top:27px" width="23" height="23" viewBox="0 0 23 23"><rect width="23" height="23" rx="4.5" fill="#6e6e6e"/><g transform="scale(0.7667)" stroke="#fff" stroke-width="2.2" stroke-linecap="round" fill="none"><path d="M13.3,6.8 L15.1,9.2 M16.8,6.8 L10.3,17.9 M6.4,17.9 H17.2 M20.4,17.9 H24 M16.9,12.2 L22.1,21.8 M9.5,20.6 L8.2,22"/></g></svg>
<div style="position:absolute;left:1437px;top:28px;font-family:'Liberation Sans', sans-serif;font-size:23.3px;color:#3a3a3a;font-weight:normal;white-space:pre;line-height:1;">StudentsAndCourses</div>
<svg class="abs" style="left:1667px;top:28px" width="11" height="22" viewBox="0 0 11 22"><path d="M2.5,2 L8.5,11 L2.5,20" fill="none" stroke="#777" stroke-width="1.8" stroke-linecap="round"/></svg>
<svg class="abs" style="left:1699px;top:26px" width="17" height="25" viewBox="0 0 17 25"><rect x="1.2" y="1.2" width="14.6" height="22.6" rx="3" fill="#d4d4d4" stroke="#6e6e6e" stroke-width="1.6"/><path d="M6,4.6 H11 M6,20.4 H11" stroke="#6e6e6e" stroke-width="1.2"/></svg>
<div style="position:absolute;left:1731px;top:28px;font-family:'Liberation Sans', sans-serif;font-size:23.3px;color:#3a3a3a;font-weight:normal;white-space:pre;line-height:1;">iPhone 16 Pro (18.2)</div>
<div class="abs" style="left:2182px;top:28px;font-family:'Liberation Sans', sans-serif;font-size:23.2px;color:#3a3a3a;white-space:pre;line-height:1">Build <b>Succeeded</b> | Today at 3:51 PM</div>
<svg class="abs" style="left:2603px;top:26px" width="24" height="23" viewBox="0 0 24 23"><path d="M12,1.5 Q13,1.5 13.6,2.5 L22.6,19.2 Q23.4,21.2 21.2,21.2 H2.8 Q0.6,21.2 1.4,19.2 L10.4,2.5 Q11,1.5 12,1.5 Z" fill="#f5b40f"/><path d="M12,7 V13.8" stroke="#fff" stroke-width="2.4" stroke-linecap="round"/><circle cx="12" cy="17.4" r="1.4" fill="#fff"/></svg>
<div style="position:absolute;left:2632.5px;top:28.2px;font-family:'Liberation Sans', sans-serif;font-size:20.5px;color:#747474;font-weight:normal;white-space:pre;line-height:1;-webkit-text-stroke:0.9px #747474">1</div>
<svg class="abs" style="left:2869px;top:25px" width="26" height="26" viewBox="0 0 26 26"><path d="M13,2 V24 M2,13 H24" stroke="#6e6e6e" stroke-width="2.5" stroke-linecap="round"/></svg>
<svg class="abs" style="left:2954px;top:21px" width="40" height="32" viewBox="0 0 40 32"><rect x="2" y="2" width="36" height="28" rx="5" fill="none" stroke="#6e6e6e" stroke-width="2.2"/><path d="M25.8,2 V30" stroke="#6e6e6e" stroke-width="2.2"/><path d="M29.5,8.6 H34.5 M29.5,12.8 H34.5 M29.5,17 H34.5" stroke="#6e6e6e" stroke-width="1.8"/></svg>
<div class="abs" style="left:936px;top:76px;width:2088px;height:2px;background:#e2e2e2"></div>
<div class="abs" style="left:936px;top:132px;width:2088px;height:2px;background:#e2e2e2"></div>
<div class="abs" style="left:936px;top:188px;width:2088px;height:1.5px;background:#e2e2e2"></div>
<svg class="abs" style="left:953px;top:91px" width="28" height="28" viewBox="0 0 28 28"><g fill="none" stroke="#717171" stroke-width="1.85"><rect x="2.05" y="2.05" width="9.6" height="9.7" rx="0.2"/><rect x="16.25" y="2.05" width="9.5" height="9.7" rx="0.2"/><rect x="2.05" y="16.15" width="9.6" height="9.6" rx="0.2"/><rect x="16.25" y="16.15" width="9.5" height="9.6" rx="0.2"/><path d="M11.6,7.9 H18.6 M20,11.7 V18.6 M9.2,19.9 H16.3"/></g></svg>
<div class="abs" style="left:998px;top:93px;width:2px;height:24px;background:#e4e4e4"></div>
<svg class="abs" style="left:1014px;top:90px" width="20" height="30" viewBox="0 0 20 30"><path d="M16.5,2.5 L3.5,15 L16.5,27.5" fill="none" stroke="#6e6e6e" stroke-width="2.2" stroke-linecap="round"/></svg>
<svg class="abs" style="left:1054px;top:90px" width="20" height="30" viewBox="0 0 20 30"><path d="M3.5,2.5 L16.5,15 L3.5,27.5" fill="none" stroke="#b6b6b6" stroke-width="2.2" stroke-linecap="round"/></svg>
<div class="abs" style="left:1087px;top:78px;width:2px;height:54px;background:#bdbdbd"></div>
<div class="abs" style="left:1089px;top:78px;width:12px;height:54px;background:linear-gradient(to right,#e6e6e6,#ffffff)"></div>
<div class="abs" style="left:2226px;top:78px;width:290px;height:54px;background:#d6e5fb"></div>
<svg style="position:absolute;left:1104px;top:94px" width="25" height="22.3" viewBox="0 0 28.5 25.4"><path fill="#ee7b4d" d="M17.7,0 C22.2,3.6 25.4,9.6 24.3,16.4 C26,18.6 27.4,21.8 28.5,25.4 C26.9,23.6 24.7,22.9 22.6,23.5 C17.2,26.4 7.4,26.3 0,16.8 C5.8,20.3 11.6,20.7 15.4,18.7 C10.6,15.4 6.1,10.9 3.1,4.3 C6.9,8.1 11.3,11.6 14.6,13.4 C11.6,10.7 8.6,6.7 6.4,2.7 C10.2,6.6 15.1,11.1 19.4,13.8 C20.4,9.6 19.9,4.6 17.7,0 Z"/></svg>
<div style="position:absolute;left:1139px;top:94.7px;font-family:'Liberation Sans', sans-serif;font-size:23.3px;color:#262626;font-weight:normal;white-space:pre;line-height:1;font-style:normal">StudentsAndCoursesApp</div>
<svg style="position:absolute;left:1490px;top:94px" width="25" height="22.3" viewBox="0 0 28.5 25.4"><path fill="#ee7b4d" d="M17.7,0 C22.2,3.6 25.4,9.6 24.3,16.4 C26,18.6 27.4,21.8 28.5,25.4 C26.9,23.6 24.7,22.9 22.6,23.5 C17.2,26.4 7.4,26.3 0,16.8 C5.8,20.3 11.6,20.7 15.4,18.7 C10.6,15.4 6.1,10.9 3.1,4.3 C6.9,8.1 11.3,11.6 14.6,13.4 C11.6,10.7 8.6,6.7 6.4,2.7 C10.2,6.6 15.1,11.1 19.4,13.8 C20.4,9.6 19.9,4.6 17.7,0 Z"/></svg>
<div style="position:absolute;left:1525px;top:94.7px;font-family:'Liberation Sans', sans-serif;font-size:23.3px;color:#262626;font-weight:normal;white-space:pre;line-height:1;font-style:normal">Enrollment…angeNotifier</div>
<svg style="position:absolute;left:1882px;top:94px" width="25" height="22.3" viewBox="0 0 28.5 25.4"><path fill="#ee7b4d" d="M17.7,0 C22.2,3.6 25.4,9.6 24.3,16.4 C26,18.6 27.4,21.8 28.5,25.4 C26.9,23.6 24.7,22.9 22.6,23.5 C17.2,26.4 7.4,26.3 0,16.8 C5.8,20.3 11.6,20.7 15.4,18.7 C10.6,15.4 6.1,10.9 3.1,4.3 C6.9,8.1 11.3,11.6 14.6,13.4 C11.6,10.7 8.6,6.7 6.4,2.7 C10.2,6.6 15.1,11.1 19.4,13.8 C20.4,9.6 19.9,4.6 17.7,0 Z"/></svg>
<div style="position:absolute;left:1917px;top:94.7px;font-family:'Liberation Sans', sans-serif;font-size:23.3px;color:#262626;font-weight:normal;white-space:pre;line-height:1;font-style:normal">EnrolmentsByCourseView</div>
<svg style="position:absolute;left:2273px;top:94px" width="25" height="22.3" viewBox="0 0 28.5 25.4"><path fill="#ee7b4d" d="M17.7,0 C22.2,3.6 25.4,9.6 24.3,16.4 C26,18.6 27.4,21.8 28.5,25.4 C26.9,23.6 24.7,22.9 22.6,23.5 C17.2,26.4 7.4,26.3 0,16.8 C5.8,20.3 11.6,20.7 15.4,18.7 C10.6,15.4 6.1,10.9 3.1,4.3 C6.9,8.1 11.3,11.6 14.6,13.4 C11.6,10.7 8.6,6.7 6.4,2.7 C10.2,6.6 15.1,11.1 19.4,13.8 C20.4,9.6 19.9,4.6 17.7,0 Z"/></svg>
<div style="position:absolute;left:2308px;top:94.7px;font-family:'Liberation Sans', sans-serif;font-size:23.3px;color:#2c6fe0;font-weight:normal;white-space:pre;line-height:1;font-style:normal">EnrolmentsView</div>
<svg style="position:absolute;left:2564px;top:94px" width="25" height="22.3" viewBox="0 0 28.5 25.4"><path fill="#b07a40" d="M17.7,0 C22.2,3.6 25.4,9.6 24.3,16.4 C26,18.6 27.4,21.8 28.5,25.4 C26.9,23.6 24.7,22.9 22.6,23.5 C17.2,26.4 7.4,26.3 0,16.8 C5.8,20.3 11.6,20.7 15.4,18.7 C10.6,15.4 6.1,10.9 3.1,4.3 C6.9,8.1 11.3,11.6 14.6,13.4 C11.6,10.7 8.6,6.7 6.4,2.7 C10.2,6.6 15.1,11.1 19.4,13.8 C20.4,9.6 19.9,4.6 17.7,0 Z"/></svg>
<div style="position:absolute;left:2597px;top:94.7px;font-family:'Liberation Sans', sans-serif;font-size:23.3px;color:#262626;font-weight:normal;white-space:pre;line-height:1;font-style:italic">Package</div>
<div class="abs" style="left:1441px;top:93px;width:1.5px;height:24px;background:#dddddd"></div>
<div class="abs" style="left:1834px;top:93px;width:1.5px;height:24px;background:#dddddd"></div>
<div class="abs" style="left:2727px;top:93px;width:1.5px;height:24px;background:#dddddd"></div>
<svg class="abs" style="left:2777px;top:93px" width="22" height="25" viewBox="0 0 22 25"><path d="M2,2.5 Q2,1.2 3.3,1.2 H12.5 L20,8.7 V22 Q20,23.6 18.4,23.6 H3.6 Q2,23.6 2,22 Z M12.5,1.2 V8.7 H20" fill="none" stroke="#6e6e6e" stroke-width="1.8" stroke-linejoin="round"/></svg>
<div style="position:absolute;left:2810px;top:94px;font-family:'Liberation Sans', sans-serif;font-size:23.3px;color:#262626;font-weight:normal;white-space:pre;line-height:1;">No</div>
<div class="abs" style="left:2841px;top:78px;width:3px;height:54px;background:linear-gradient(to right,#f0f0f0,#c9c9c9)"></div>
<div class="abs" style="left:2844px;top:78px;width:180px;height:54px;background:#fff"></div>
<svg class="abs" style="left:2857px;top:90px" width="30" height="30" viewBox="0 0 30 30"><path d="M4,10.5 H25 M19.5,4.5 L25.5,10.5 M25.5,19.5 H5 M10.5,13.5 L4.5,19.5 L10.5,25.5" fill="none" stroke="#6e6e6e" stroke-width="2" stroke-linecap="round" stroke-linejoin="round"/></svg>
<svg class="abs" style="left:2905px;top:90px" width="38" height="30" viewBox="0 0 38 30"><path d="M1,4.5 H37 M1,11 H37 M1,17.5 H26 M1,24 H37" stroke="#6e6e6e" stroke-width="2"/></svg>
<div class="abs" style="left:2960px;top:93px;width:1.5px;height:24px;background:#dddddd"></div>
<svg class="abs" style="left:2978px;top:90px" width="30" height="30" viewBox="0 0 30 30"><rect x="2" y="2" width="26" height="26" rx="4" fill="none" stroke="#6e6e6e" stroke-width="2"/><path d="M2,9.5 H28 M15,13 V23 M10,18 H20" stroke="#6e6e6e" stroke-width="2"/></svg>
<svg style="position:absolute;left:953px;top:147px" width="26" height="26" viewBox="0 0 30 30"><rect x="0" y="0" width="30" height="30" rx="7.5" fill="#0a74ff"/><rect x="2.4" y="2.4" width="25.2" height="25.2" rx="5.4" fill="#ffffff"/><rect x="2.4" y="2.4" width="25.2" height="25.2" rx="5.4" fill="none" stroke="#b9d6fb" stroke-width="1.2"/><rect x="3.8" y="3.8" width="22.4" height="22.4" rx="4.2" fill="#1a82ff"/><g stroke="#fff" stroke-width="2" stroke-linecap="round" fill="none"><path d="M13.3,6.8 L15.1,9.2 M16.8,6.8 L10.3,17.9 M6.4,17.9 H17.2 M20.4,17.9 H24 M16.9,12.2 L22.1,21.8 M9.5,20.6 L8.2,22"/></g></svg>
<div style="position:absolute;left:990px;top:150px;font-family:'Liberation Sans', sans-serif;font-size:23.4px;color:#262626;font-weight:normal;white-space:pre;line-height:1;">StudentsAndCourses</div>
<svg class="abs" style="left:1221px;top:149px" width="11" height="24" viewBox="0 0 11 24"><path d="M2.5,3 L8.5,12 L2.5,21" fill="none" stroke="#8a8a8a" stroke-width="1.8" stroke-linecap="round"/></svg>
<svg style="position:absolute;left:1247px;top:150px" width="25" height="20.7" viewBox="0 0 29 24"><path fill="#80858a" d="M0,3.2 Q0,0 3.2,0 H8 Q9.6,0 10.6,1 L12.2,2.6 H25.8 Q29,2.6 29,5.6 V8 H0 Z"/><path fill="#80858a" d="M0,10 H29 V20.8 Q29,24 25.8,24 H3.2 Q0,24 0,20.8 Z"/></svg>
<div style="position:absolute;left:1284px;top:150px;font-family:'Liberation Sans', sans-serif;font-size:23.4px;color:#262626;font-weight:normal;white-space:pre;line-height:1;">StudentsAndCourses</div>
<svg class="abs" style="left:1515px;top:149px" width="11" height="24" viewBox="0 0 11 24"><path d="M2.5,3 L8.5,12 L2.5,21" fill="none" stroke="#8a8a8a" stroke-width="1.8" stroke-linecap="round"/></svg>
<svg style="position:absolute;left:1542px;top:150px" width="25" height="20.7" viewBox="0 0 29 24"><path fill="#80858a" d="M0,3.2 Q0,0 3.2,0 H8 Q9.6,0 10.6,1 L12.2,2.6 H25.8 Q29,2.6 29,5.6 V8 H0 Z"/><path fill="#80858a" d="M0,10 H29 V20.8 Q29,24 25.8,24 H3.2 Q0,24 0,20.8 Z"/></svg>
<div style="position:absolute;left:1578px;top:150px;font-family:'Liberation Sans', sans-serif;font-size:23.4px;color:#262626;font-weight:normal;white-space:pre;line-height:1;">Views</div>
<svg class="abs" style="left:1649px;top:149px" width="11" height="24" viewBox="0 0 11 24"><path d="M2.5,3 L8.5,12 L2.5,21" fill="none" stroke="#8a8a8a" stroke-width="1.8" stroke-linecap="round"/></svg>
<svg style="position:absolute;left:1676px;top:149px" width="24" height="21.4" viewBox="0 0 28.5 25.4"><path fill="#f0652f" d="M17.7,0 C22.2,3.6 25.4,9.6 24.3,16.4 C26,18.6 27.4,21.8 28.5,25.4 C26.9,23.6 24.7,22.9 22.6,23.5 C17.2,26.4 7.4,26.3 0,16.8 C5.8,20.3 11.6,20.7 15.4,18.7 C10.6,15.4 6.1,10.9 3.1,4.3 C6.9,8.1 11.3,11.6 14.6,13.4 C11.6,10.7 8.6,6.7 6.4,2.7 C10.2,6.6 15.1,11.1 19.4,13.8 C20.4,9.6 19.9,4.6 17.7,0 Z"/></svg>
<div style="position:absolute;left:1712px;top:150px;font-family:'Liberation Sans', sans-serif;font-size:23.4px;color:#262626;font-weight:normal;white-space:pre;line-height:1;">EnrolmentsView</div>
<svg class="abs" style="left:1889px;top:149px" width="11" height="24" viewBox="0 0 11 24"><path d="M2.5,3 L8.5,12 L2.5,21" fill="none" stroke="#8a8a8a" stroke-width="1.8" stroke-linecap="round"/></svg>
<svg class="abs" style="left:1919px;top:149px" width="22" height="23" viewBox="0 0 22 23"><path d="M2,1 V22" stroke="#e0442e" stroke-width="2.4"/><path d="M2,2 H20 L16,8 L20,14 H2 Z" fill="#e0442e"/></svg>
<div style="position:absolute;left:1952px;top:150px;font-family:'Liberation Sans', sans-serif;font-size:23.4px;color:#262626;font-weight:normal;white-space:pre;line-height:1;">Stored properties</div>
<svg class="abs" style="left:2932px;top:148px" width="16" height="26" viewBox="0 0 16 26"><path d="M13.5,2 L2.5,13 L13.5,24" fill="none" stroke="#6e6e6e" stroke-width="2" stroke-linecap="round"/></svg>
<svg class="abs" style="left:2958px;top:149px" width="24" height="23" viewBox="0 0 24 23"><path d="M12,1.5 Q13,1.5 13.6,2.5 L22.6,19.2 Q23.4,21.2 21.2,21.2 H2.8 Q0.6,21.2 1.4,19.2 L10.4,2.5 Q11,1.5 12,1.5 Z" fill="#f5b40f"/><path d="M12,7 V13.8" stroke="#fff" stroke-width="2.4" stroke-linecap="round"/><circle cx="12" cy="17.4" r="1.4" fill="#fff"/></svg>
<svg class="abs" style="left:2991px;top:148px" width="16" height="26" viewBox="0 0 16 26"><path d="M2.5,2 L13.5,13 L2.5,24" fill="none" stroke="#6e6e6e" stroke-width="2" stroke-linecap="round"/></svg>
<div class="abs" style="left:936px;top:189px;width:2088px;height:1643px;overflow:hidden">
<div class="abs" style="left:0;top:357px;width:2060px;height:36px;background:#ebf3fe"></div>
<div class="abs" style="left:10px;top:321px;width:6.5px;height:248px;border-radius:5px;background:#afc9f8;border:2px solid #3478f6"></div>
<div class="abs" style="left:86px;top:-37.30px;width:14px;height:212.00px;border-radius:7px;background:#e8e8e8;"></div>
<div class="abs" style="left:86px;top:286.70px;width:14px;height:1184.00px;border-radius:7px;background:#e8e8e8;"></div>
<div class="abs" style="left:86px;top:1510.70px;width:14px;height:104.00px;border-radius:7px;background:#e8e8e8;"></div>
<div class="abs" style="left:86px;top:430.70px;width:14px;height:68.00px;border-radius:7px;background:#d3d3d3;box-shadow:0 0 0 1.5px rgba(255,255,255,0.75);"></div>
<div class="abs" style="left:86px;top:574.70px;width:14px;height:860.00px;border-radius:7px;background:#d3d3d3;box-shadow:0 0 0 1.5px rgba(255,255,255,0.75);"></div>
<div class="abs" style="left:86px;top:610.70px;width:14px;height:788.00px;border-radius:7px;background:#c1c1c1;box-shadow:0 0 0 1.5px rgba(255,255,255,0.75);"></div>
<div class="abs" style="left:86px;top:646.70px;width:14px;height:680.00px;border-radius:7px;background:#afafaf;box-shadow:0 0 0 1.5px rgba(255,255,255,0.75);"></div>
<div class="abs" style="left:86px;top:718.70px;width:14px;height:248.00px;border-radius:7px;background:#a0a0a0;box-shadow:0 0 0 1.5px rgba(255,255,255,0.75);"></div>
<div class="abs" style="left:86px;top:1006.70px;width:14px;height:248.00px;border-radius:7px;background:#a0a0a0;box-shadow:0 0 0 1.5px rgba(255,255,255,0.75);"></div>
<div class="abs" style="left:86px;top:754.70px;width:14px;height:104.00px;border-radius:7px;background:#8f8f8f;box-shadow:0 0 0 1.5px rgba(255,255,255,0.75);"></div>
<div class="abs" style="left:86px;top:1042.70px;width:14px;height:104.00px;border-radius:7px;background:#8f8f8f;box-shadow:0 0 0 1.5px rgba(255,255,255,0.75);"></div>
<div class="abs" style="left:86px;top:877.70px;width:14px;height:2px;background:#fff"></div>
<div class="abs" style="left:86px;top:1165.70px;width:14px;height:2px;background:#fff"></div>
<div class="ln" style="left:19px;top:-3.30px;height:36px;line-height:36px;color:#a3a3a3;padding-top:2px">2</div>
<div class="ln" style="left:19px;top:32.70px;height:36px;line-height:36px;color:#a3a3a3;padding-top:2px">3</div>
<div class="ln" style="left:19px;top:68.70px;height:36px;line-height:36px;color:#a3a3a3;padding-top:2px">4</div>
<div class="ln" style="left:19px;top:104.70px;height:36px;line-height:36px;color:#a3a3a3;padding-top:2px">5</div>
<div class="ln" style="left:19px;top:140.70px;height:36px;line-height:36px;color:#a3a3a3;padding-top:2px">6</div>
<div class="ln" style="left:19px;top:176.70px;height:36px;line-height:36px;color:#a3a3a3;padding-top:2px">7</div>
<div class="ln" style="left:19px;top:212.70px;height:36px;line-height:36px;color:#a3a3a3;padding-top:2px">8</div>
<div class="ln" style="left:19px;top:248.70px;height:36px;line-height:36px;color:#a3a3a3;padding-top:2px">9</div>
<div class="ln" style="left:19px;top:284.70px;height:36px;line-height:36px;color:#a3a3a3;padding-top:2px">10</div>
<div class="ln" style="left:19px;top:320.70px;height:36px;line-height:36px;color:#a3a3a3;padding-top:2px">11</div>
<div class="ln" style="left:19px;top:356.70px;height:36px;line-height:36px;color:#1a1a1a;padding-top:2px">12</div>
<div class="ln" style="left:19px;top:392.70px;height:36px;line-height:36px;color:#a3a3a3;padding-top:2px">13</div>
<div class="ln" style="left:19px;top:428.70px;height:36px;line-height:36px;color:#a3a3a3;padding-top:2px">14</div>
<div class="ln" style="left:19px;top:464.70px;height:36px;line-height:36px;color:#a3a3a3;padding-top:2px">15</div>
<div class="ln" style="left:19px;top:500.70px;height:36px;line-height:36px;color:#a3a3a3;padding-top:2px">16</div>
<div class="ln" style="left:19px;top:536.70px;height:36px;line-height:36px;color:#a3a3a3;padding-top:2px">17</div>
<div class="ln" style="left:19px;top:572.70px;height:36px;line-height:36px;color:#a3a3a3;padding-top:2px">18</div>
<div class="ln" style="left:19px;top:608.70px;height:36px;line-height:36px;color:#a3a3a3;padding-top:2px">19</div>
<div class="ln" style="left:19px;top:644.70px;height:36px;line-height:36px;color:#a3a3a3;padding-top:2px">20</div>
<div class="ln" style="left:19px;top:680.70px;height:36px;line-height:36px;color:#a3a3a3;padding-top:2px">21</div>
<div class="ln" style="left:19px;top:716.70px;height:36px;line-height:36px;color:#a3a3a3;padding-top:2px">22</div>
<div class="ln" style="left:19px;top:752.70px;height:36px;line-height:36px;color:#a3a3a3;padding-top:2px">23</div>
<div class="ln" style="left:19px;top:788.70px;height:36px;line-height:36px;color:#a3a3a3;padding-top:2px">24</div>
<div class="ln" style="left:19px;top:824.70px;height:36px;line-height:36px;color:#a3a3a3;padding-top:2px">25</div>
<div class="ln" style="left:19px;top:860.70px;height:36px;line-height:36px;color:#a3a3a3;padding-top:2px">26</div>
<div class="ln" style="left:19px;top:896.70px;height:36px;line-height:36px;color:#a3a3a3;padding-top:2px">27</div>
<div class="ln" style="left:19px;top:932.70px;height:36px;line-height:36px;color:#a3a3a3;padding-top:2px">28</div>
<div class="ln" style="left:19px;top:968.70px;height:36px;line-height:36px;color:#a3a3a3;padding-top:2px">29</div>
<div class="ln" style="left:19px;top:1004.70px;height:36px;line-height:36px;color:#a3a3a3;padding-top:2px">30</div>
<div class="ln" style="left:19px;top:1040.70px;height:36px;line-height:36px;color:#a3a3a3;padding-top:2px">31</div>
<div class="ln" style="left:19px;top:1076.70px;height:36px;line-height:36px;color:#a3a3a3;padding-top:2px">32</div>
<div class="ln" style="left:19px;top:1112.70px;height:36px;line-height:36px;color:#a3a3a3;padding-top:2px">33</div>
<div class="ln" style="left:19px;top:1148.70px;height:36px;line-height:36px;color:#a3a3a3;padding-top:2px">34</div>
<div class="ln" style="left:19px;top:1184.70px;height:36px;line-height:36px;color:#a3a3a3;padding-top:2px">35</div>
<div class="ln" style="left:19px;top:1220.70px;height:36px;line-height:36px;color:#a3a3a3;padding-top:2px">36</div>
<div class="ln" style="left:19px;top:1256.70px;height:36px;line-height:36px;color:#a3a3a3;padding-top:2px">37</div>
<div class="ln" style="left:19px;top:1292.70px;height:36px;line-height:36px;color:#a3a3a3;padding-top:2px">38</div>
<div class="ln" style="left:19px;top:1328.70px;height:36px;line-height:36px;color:#a3a3a3;padding-top:2px">39</div>
<div class="ln" style="left:19px;top:1364.70px;height:36px;line-height:36px;color:#a3a3a3;padding-top:2px">40</div>
<div class="ln" style="left:19px;top:1400.70px;height:36px;line-height:36px;color:#a3a3a3;padding-top:2px">41</div>
<div class="ln" style="left:19px;top:1436.70px;height:36px;line-height:36px;color:#a3a3a3;padding-top:2px">42</div>
<div class="ln" style="left:19px;top:1472.70px;height:36px;line-height:36px;color:#a3a3a3;padding-top:2px">43</div>
<div class="ln" style="left:19px;top:1508.70px;height:36px;line-height:36px;color:#a3a3a3;padding-top:2px">44</div>
<div class="ln" style="left:19px;top:1544.70px;height:36px;line-height:36px;color:#a3a3a3;padding-top:2px">45</div>
<div class="ln" style="left:19px;top:1580.70px;height:36px;line-height:36px;color:#a3a3a3;padding-top:2px">46</div>
<div class="ln" style="left:19px;top:1616.70px;height:36px;line-height:36px;color:#a3a3a3;padding-top:2px">47</div>
<div class="code" style="left:122px;top:-2.10px;height:36px;line-height:36px"><span class="c">//  EnrolmentsView.swift</span></div>
<div class="code" style="left:122px;top:33.90px;height:36px;line-height:36px"><span class="c">//  StudentsAndCourses</span></div>
<div class="code" style="left:122px;top:69.90px;height:36px;line-height:36px"><span class="c">//</span></div>
<div class="code" style="left:122px;top:105.90px;height:36px;line-height:36px"><span class="c">//  Created by Russell Gordon on 2024-06-09.</span></div>
<div class="code" style="left:122px;top:141.90px;height:36px;line-height:36px"><span class="c">//</span></div>
<div class="code" style="left:122px;top:213.90px;height:36px;line-height:36px"><span class="k">import</span> SwiftUI</div>
<div class="code" style="left:122px;top:285.90px;height:36px;line-height:36px"><span class="k">struct</span> <span class="t">EnrolmentsView</span>: <span class="sy">View</span> {</div>
<div class="code" style="left:122px;top:357.90px;height:36px;line-height:36px">    <span class="c">// </span><span class="mk">MARK: Stored properties</span></div>
<div class="code" style="left:122px;top:429.90px;height:36px;line-height:36px">    <span class="c">// Gain access to the shared change notifier so we can tell when</span></div>
<div class="code" style="left:122px;top:465.90px;height:36px;line-height:36px">    <span class="c">// a refresh of data on this view is required</span></div>
<div class="code" style="left:122px;top:501.90px;height:36px;line-height:36px">    <span class="sy">@Environment</span>(<span class="p">EnrollmentChangeNotifier</span>.<span class="k">self</span>) <span class="k">private</span> <span class="k">var</span> <span class="d">changeNotifier</span></div>
<div class="code" style="left:122px;top:573.90px;height:36px;line-height:36px">    <span class="k">var</span> <span class="d">body</span>: <span class="k">some</span> <span class="sy">View</span> {</div>
<div class="code" style="left:122px;top:609.90px;height:36px;line-height:36px">        <span class="sy">NavigationStack</span> {</div>
<div class="code" style="left:122px;top:645.90px;height:36px;line-height:36px">            <span class="sy">List</span> {</div>
<div class="code" style="left:122px;top:717.90px;height:36px;line-height:36px">                <span class="sy">NavigationLink</span> {</div>
<div class="code" style="left:122px;top:753.90px;height:36px;line-height:36px">                    <span class="p">EnrolmentsByCourseView</span>(</div>
<div class="code" style="left:122px;top:789.90px;height:36px;line-height:36px">                        <span class="pf">viewModel</span>: <span class="p">EnrolmentsByCourseViewModel</span>()</div>
<div class="code" style="left:122px;top:825.90px;height:36px;line-height:36px">                    )</div>
<div class="code" style="left:122px;top:861.90px;height:36px;line-height:36px">                } <span class="sf">label</span>: {</div>
<div class="code" style="left:122px;top:897.90px;height:36px;line-height:36px">                    <span class="sy">Text</span>(<span class="s">&quot;By course&quot;</span>)</div>
<div class="code" style="left:122px;top:933.90px;height:36px;line-height:36px">                }</div>
<div class="code" style="left:122px;top:1005.90px;height:36px;line-height:36px">                <span class="sy">NavigationLink</span> {</div>
<div class="code" style="left:122px;top:1041.90px;height:36px;line-height:36px">                    <span class="p">EnrolmentsByStudentView</span>(</div>
<div class="code" style="left:122px;top:1077.90px;height:36px;line-height:36px">                        <span class="pf">viewModel</span>: <span class="p">EnrolmentsByStudentViewModel</span>()</div>
<div class="code" style="left:122px;top:1113.90px;height:36px;line-height:36px">                    )</div>
<div class="code" style="left:122px;top:1149.90px;height:36px;line-height:36px">                } <span class="sf">label</span>: {</div>
<div class="code" style="left:122px;top:1185.90px;height:36px;line-height:36px">                    <span class="sy">Text</span>(<span class="s">&quot;By student&quot;</span>)</div>
<div class="code" style="left:122px;top:1221.90px;height:36px;line-height:36px">                }</div>
<div class="code" style="left:122px;top:1293.90px;height:36px;line-height:36px">            }</div>
<div class="code" style="left:122px;top:1329.90px;height:36px;line-height:36px">            .<span class="sf">navigationTitle</span>(<span class="s">&quot;Enrolments&quot;</span>)</div>
<div class="code" style="left:122px;top:1365.90px;height:36px;line-height:36px">        }</div>
<div class="code" style="left:122px;top:1401.90px;height:36px;line-height:36px">    }</div>
<div class="code" style="left:122px;top:1437.90px;height:36px;line-height:36px">}</div>
<div class="code" style="left:122px;top:1509.90px;height:36px;line-height:36px"><span class="sf">#Preview</span> {</div>
<div class="code" style="left:122px;top:1545.90px;height:36px;line-height:36px">    <span class="p">EnrolmentsView</span>()</div>
<div class="code" style="left:122px;top:1581.90px;height:36px;line-height:36px">}</div>
<div class="abs" style="left:2059px;top:0;width:1px;height:1643px;background:#e6e6e6"></div>
<div class="abs" style="left:2060px;top:0;width:28px;height:1643px;background:#fafafa"></div>
<div class="abs" style="left:2066px;top:32px;width:16px;height:1112px;border-radius:8px;background:#7f7f7f"></div>
<div class="abs" style="left:2087px;top:0;width:1px;height:1643px;background:#ececec"></div>
</div>
<div class="abs" style="left:936px;top:1832px;width:2088px;height:1.5px;background:#e2e2e2"></div>
<div class="abs" style="left:959px;top:1852px;width:31px;height:18px;border-radius:4px 9px 9px 4px;background:#3478f6"></div>
<div style="position:absolute;left:2760px;top:1849px;font-family:'Liberation Sans', sans-serif;font-size:24.5px;color:#7b7b7b;font-weight:normal;white-space:pre;line-height:1;-webkit-text-stroke:0.35px #7b7b7b">Line: 12  Col: 21</div>
<div class="abs" style="left:2955px;top:1850px;width:1.5px;height:22px;background:#dddddd"></div>
<svg class="abs" style="left:2972px;top:1847px" width="28" height="28" viewBox="0 0 28 28"><rect x="1.8" y="1.8" width="24.4" height="24.6" rx="5" fill="none" stroke="#767676" stroke-width="2"/><rect x="5.1" y="17.1" width="17.7" height="5.8" rx="2.9" fill="#7a7a7a"/></svg>
</div></body></html>
